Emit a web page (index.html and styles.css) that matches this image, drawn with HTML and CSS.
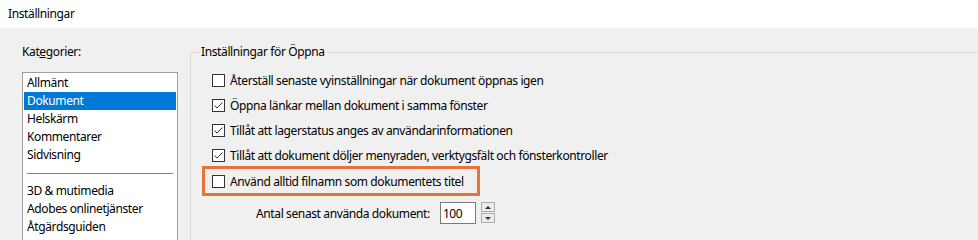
FILE: index.html
```html
<!DOCTYPE html>
<html lang="sv">
<head>
    <meta charset="UTF-8">
    <title>Inställningar</title>
    <link rel="stylesheet" href="styles.css">
</head>
<body>
    <div class="titlebar">Inställningar</div>

    <div class="dialog">
        <div class="categories">
            <div class="cat-label">Kat<u>e</u>gorier:</div>
            <ul class="cat-list">
                <li>Allmänt</li>
                <li class="selected">Dokument</li>
                <li>Helskärm</li>
                <li>Kommentarer</li>
                <li>Sidvisning</li>
                <li class="separator"></li>
                <li>3D &amp; mutimedia</li>
                <li>Adobes onlinetjänster</li>
                <li>Åtgärdsguiden</li>
            </ul>
        </div>

        <div class="group">
            <div class="group-title">Inställningar för Öppna</div>
            <div class="options">
                <label class="option">
                    <span class="checkbox"></span>
                    Återställ senaste vyinställningar när dokument öppnas igen
                </label>
                <label class="option">
                    <span class="checkbox">
                        <svg width="11" height="11" viewBox="0 0 11 11"><polyline points="1.5,5.5 4,8 9.5,2.5" /></svg>
                    </span>
                    Öppna länkar mellan dokument i samma fönster
                </label>
                <label class="option">
                    <span class="checkbox">
                        <svg width="11" height="11" viewBox="0 0 11 11"><polyline points="1.5,5.5 4,8 9.5,2.5" /></svg>
                    </span>
                    Tillåt att lagerstatus anges av användarinformationen
                </label>
                <label class="option">
                    <span class="checkbox">
                        <svg width="11" height="11" viewBox="0 0 11 11"><polyline points="1.5,5.5 4,8 9.5,2.5" /></svg>
                    </span>
                    Tillåt att dokument döljer menyraden, verktygsfält och fönsterkontroller
                </label>
                <label class="option highlighted">
                    <span class="checkbox"></span>
                    Använd alltid filnamn som dokumentets titel
                </label>

                <div class="recent-row">
                    <span>Antal senast använda dokument:</span>
                    <input type="text" class="recent-input" value="100">
                    <div class="spinner">
                        <span class="spin-btn"><i class="arrow-up"></i></span>
                        <span class="spin-btn"><i class="arrow-down"></i></span>
                    </div>
                </div>
            </div>
        </div>
    </div>
</body>
</html>
```

FILE: styles.css
```css
:root {
    --dialog-bg: #f0f0f0;
    --text-color: #000;
    --select-color: #0078d7;
    --highlight-color: #e8733a;
    --group-line: #dcdcdc;
}

* {
    box-sizing: border-box;
    margin: 0;
    padding: 0;
}

body {
    font-family: "Noto Sans", "Open Sans", sans-serif;
    font-size: 12px;
    letter-spacing: -0.38px;
    color: var(--text-color);
    background-color: var(--dialog-bg);
    width: 978px;
    height: 240px;
    overflow: hidden;
}

.titlebar {
    height: 28px;
    line-height: 28px;
    padding-left: 8px;
    background: white;
}

.dialog {
    display: flex;
    height: 212px;
    padding-left: 22px;
}

/* Kategorier */
.categories {
    width: 156px;
    display: flex;
    flex-direction: column;
}

.cat-label {
    height: 44px;
    line-height: 16px;
    padding-top: 16px;
}

.cat-list {
    list-style: none;
    flex: 1;
    background: white;
    border: 1px solid #a0a0a0;
    border-bottom: none;
    padding: 1px 1px 0;
}

.cat-list li {
    height: 18px;
    line-height: 18px;
    padding-left: 3px;
}

.cat-list li.selected {
    background-color: var(--select-color);
    color: white;
}

.cat-list li.separator {
    display: flex;
    align-items: center;
    padding: 0 3px;
}

.cat-list li.separator::after {
    content: "";
    flex: 1;
    height: 1px;
    background-color: #3d8fc6;
}

/* Gruppruta */
.group {
    flex: 1;
    margin-left: 12px;
    margin-top: 24px;
    border-top: 1px solid var(--group-line);
    border-left: 1px solid var(--group-line);
}

.group-title {
    display: inline-block;
    margin-left: 8px;
    margin-top: -9px;
    padding: 0 2px;
    line-height: 16px;
    background-color: var(--dialog-bg);
    vertical-align: top;
}

.options {
    padding-left: 21px;
    margin-top: -2px;
}

.option {
    display: flex;
    align-items: center;
    height: 25px;
    gap: 5px;
    white-space: nowrap;
}

.checkbox {
    width: 13px;
    height: 13px;
    border: 1px solid #333;
    background: white;
    display: flex;
    align-items: center;
    justify-content: center;
}

.checkbox svg polyline {
    fill: none;
    stroke: #333;
    stroke-width: 1;
}

.option.highlighted {
    width: 278px;
    height: 30px;
    margin-left: -10px;
    margin-top: -2px;
    padding-left: 7px;
    border: 3px solid var(--highlight-color);
}

.recent-row {
    display: flex;
    align-items: center;
    height: 22px;
    margin-top: 6px;
    padding-left: 44px;
}

.recent-input {
    width: 36px;
    height: 22px;
    margin-left: 10px;
    border: 1px solid #7a7a7a;
    background: white;
    font-family: inherit;
    font-size: 12px;
    letter-spacing: inherit;
    padding-left: 2px;
    outline: none;
}

.spinner {
    display: flex;
    flex-direction: column;
    margin-left: 5px;
    height: 22px;
    gap: 1px;
}

.spin-btn {
    width: 14px;
    height: 10px;
    border: 1px solid #acacac;
    background: #eaeaea;
    display: flex;
    align-items: center;
    justify-content: center;
}

.arrow-up {
    border-left: 3px solid transparent;
    border-right: 3px solid transparent;
    border-bottom: 3px solid #333;
}

.arrow-down {
    border-left: 3px solid transparent;
    border-right: 3px solid transparent;
    border-top: 3px solid #333;
}
```
